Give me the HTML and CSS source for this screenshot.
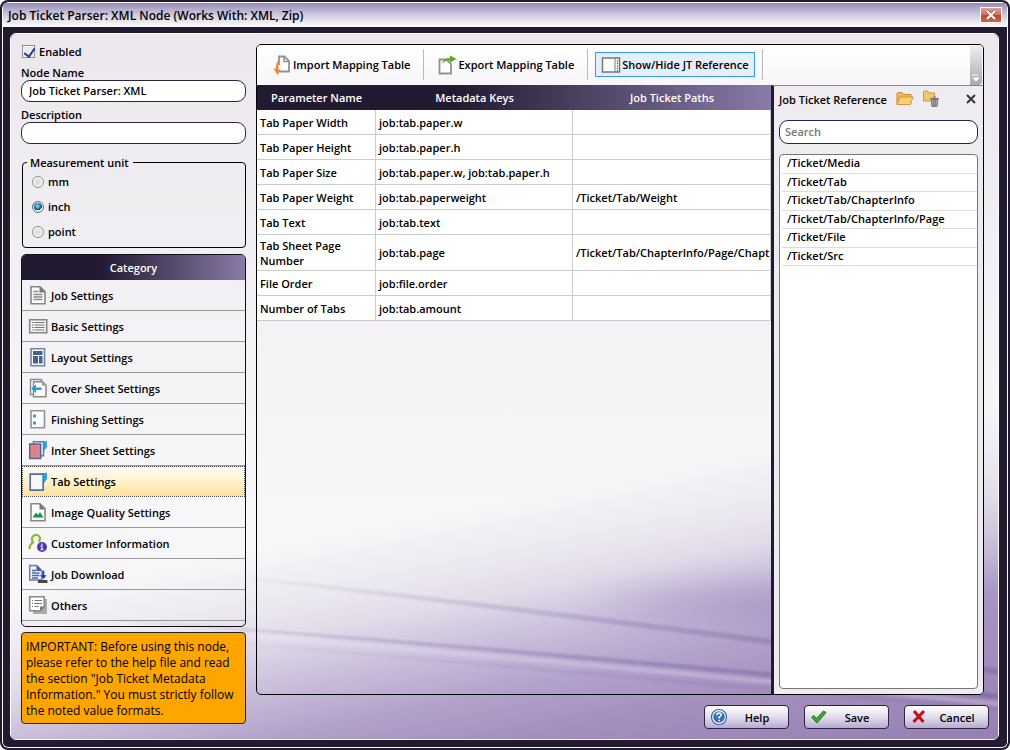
FILE: index.html
```html
<!DOCTYPE html>
<html lang="en">
<head>
<meta charset="utf-8">
<title>Job Ticket Parser</title>
<link rel="stylesheet" href="styles.css">
</head>
<body>
<div class="window">
  <header class="titlebar">
    <h1 class="title">Job Ticket Parser: XML Node (Works With: XML, Zip)</h1>
    <button class="win-close" type="button" aria-label="Close window">
      <svg width="10" height="10" viewBox="0 0 10 10"><path d="M1 1l8 8M9 1L1 9" stroke="#8a4a48" stroke-width="3.4"/><path d="M1 1l8 8M9 1L1 9" stroke="#fff" stroke-width="2.2"/></svg>
    </button>
  </header>
  <main class="content">
    <svg class="backdrop" viewBox="10 33 988 706" preserveAspectRatio="none" aria-hidden="true">
      <defs>
        <linearGradient id="top" x1="0" y1="0" x2="0" y2="1"><stop offset="0" stop-color="#ece7ed"/><stop offset=".35" stop-color="#f2f0f4"/><stop offset=".68" stop-color="#f7f7f9"/><stop offset="1" stop-color="#f7f7f9"/></linearGradient>
        <linearGradient id="haze" gradientUnits="userSpaceOnUse" x1="0" y1="600" x2="65" y2="927">
          <stop offset="0" stop-color="#ece8f0" stop-opacity="0"/><stop offset=".17" stop-color="#ece8f0"/><stop offset=".27" stop-color="#e2dcea"/><stop offset=".41" stop-color="#cbbfdb"/><stop offset=".56" stop-color="#b3a2cb"/><stop offset=".72" stop-color="#a38ebe"/><stop offset="1" stop-color="#967fb2"/>
        </linearGradient>
        <linearGradient id="streak" x1="0" y1="0" x2="1" y2="0"><stop offset="0" stop-color="#8d7bb0" stop-opacity=".08"/><stop offset=".5" stop-color="#8d78b0" stop-opacity=".5"/><stop offset="1" stop-color="#8670aa"/></linearGradient>
        <linearGradient id="shine" x1="0" y1="0" x2="1" y2="0"><stop offset="0" stop-color="#fff" stop-opacity=".15"/><stop offset="1" stop-color="#d8cbe4" stop-opacity=".4"/></linearGradient>
        <filter id="soft" x="-30%" y="-60%" width="160%" height="220%"><feGaussianBlur stdDeviation="17"/></filter>
        <filter id="fine" x="-5%" y="-20%" width="110%" height="140%"><feGaussianBlur stdDeviation="1.2"/></filter>
      </defs>
      <rect x="10" y="33" width="988" height="706" fill="url(#top)"/>
      <rect x="10" y="33" width="988" height="706" fill="url(#haze)"/>
      <path d="M1040 580Q780 570 580 608Q760 620 1040 660Z" fill="#a18dbf" opacity=".7" filter="url(#soft)"/>
      <g filter="url(#fine)">
        <path d="M250 577Q500 602 1000 669L1000 675Q500 608 250 580Z" fill="url(#streak)" opacity=".75"/>
        <path d="M120 619Q500 645 1000 694L1000 699Q500 650 120 621Z" fill="url(#streak)"/>
        <path d="M120 624Q500 652 1000 702L1000 706Q500 657 120 629Z" fill="url(#shine)"/>
        <path d="M200 638Q500 664 1000 708L1000 711Q500 668 200 641Z" fill="url(#streak)" opacity=".4"/>
      </g>
    </svg>

    <div class="body">
      <aside class="side">
        <label class="check"><input type="checkbox" checked> Enabled</label>
        <div class="field">
          <label for="node-name">Node Name</label>
          <input id="node-name" class="text" type="text" value="Job Ticket Parser: XML">
        </div>
        <div class="field">
          <label for="description">Description</label>
          <input id="description" class="text" type="text">
        </div>
        <fieldset class="units">
          <legend>Measurement unit</legend>
          <label><input type="radio" name="unit"> mm</label>
          <label><input type="radio" name="unit" checked> inch</label>
          <label><input type="radio" name="unit"> point</label>
        </fieldset>
        <nav class="category">
          <h2 class="cat-head">Category</h2>
          <button class="cat" type="button"><svg class="ico" viewBox="0 0 20 20"><path d="M3 1.7h9l5 5v12H3z" fill="#fff" stroke="#888" stroke-width="1.6"/><path d="M11.5 1.5v6H17z" fill="#777"/><path d="M5.500 6.500h5M5.500 9.500h9M5.500 12h9M5.500 14.500h9" stroke="#888" stroke-width="1.400"/></svg>Job Settings</button>
          <button class="cat" type="button"><svg class="ico" viewBox="0 0 20 20"><path d="M1.700 3.700h17v13h-17z" fill="#f5f5f5" stroke="#858585" stroke-width="1.600"/><path d="M4 6.500h1.500M4 9h1.500M4 11.500h1.500M4 14h1.500M6.500 6.500h10M6.500 9h10M6.500 11.500h10M6.500 14h10" stroke="#777" stroke-width="1.200"/></svg>Basic Settings</button>
          <button class="cat" type="button"><svg class="ico" viewBox="0 0 20 20"><path d="M3 1.700h13.500v17H3z" fill="#fff" stroke="#7283ab" stroke-width="1.600"/><path d="M5 4h9.500v4H5zM5 9h5v7.500H5zM11 9h3.500v7.500H11z" fill="#465f91"/></svg>Layout Settings</button>
          <button class="cat" type="button"><svg class="ico" viewBox="0 0 20 20"><path d="M2.500 1.500h11v15h-11z" fill="#fff" stroke="#888" stroke-width="1.400"/><path d="M5.500 3.700h9l3.500 3.500v11.500H5.500z" fill="#fff" stroke="#888" stroke-width="1.500"/><path d="M14 3v4.500h4z" fill="#999"/><path d="M3 10.500L8 6.500v3h5.500v2.500H8v3z" fill="#289bd2"/></svg>Cover Sheet Settings</button>
          <button class="cat" type="button"><svg class="ico" viewBox="0 0 20 20"><path d="M3 1.700h13.500v17H3z" fill="#fff" stroke="#929292" stroke-width="1.600"/><path d="M5 5.500h3v3H5zM5 12.500h3v3H5z" fill="#29a4df"/></svg>Finishing Settings</button>
          <button class="cat" type="button"><svg class="ico" viewBox="0 0 20 20"><path d="M14 1.500h5V7l-3 4z" fill="#25a7db"/><path d="M5.500 1.700h10v14h-10z" fill="#fff" stroke="#6479a9" stroke-width="1.500"/><path d="M15.500 1.500H19V6l-3 3z" fill="#25a7db"/><path d="M1.700 4h11v14.500h-11z" fill="#e28188" stroke="#566790" stroke-width="1.500"/></svg>Inter Sheet Settings</button>
          <button class="cat selected" type="button"><svg class="ico" viewBox="0 0 20 20"><path d="M14 1h5v6l-3 4z" fill="#25a7db"/><path d="M2.200 2.200h13v16h-13z" fill="#f7f9ff" stroke="#566d9e" stroke-width="1.700"/><path d="M15 1.500h4V6l-3 4z" fill="#25a7db"/></svg>Tab Settings</button>
          <button class="cat" type="button"><svg class="ico" viewBox="0 0 20 20"><path d="M3 1.700h9l5 5v12H3z" fill="#fff" stroke="#888" stroke-width="1.600"/><path d="M11.500 1.500v6H17z" fill="#777"/><path d="M4.500 15.500l3.500-5 2 2.500 2-3 3.500 5.500z" fill="#129447"/></svg>Image Quality Settings</button>
          <button class="cat" type="button"><svg class="ico" viewBox="0 0 20 20"><path d="M1.500 16c0-5 2-5.500 3.500-6.500C2.500 5 5 1.800 8 1.800s5.500 3.200 2.700 7" fill="none" stroke="#8aba35" stroke-width="2.200"/><circle cx="14" cy="14" r="5" fill="#5536a0"/><path d="M12.500 13h1.500v3.500M12.500 16.500h3M14 10.500v1.500" stroke="#ddd3fb" stroke-width="1.300" fill="none"/></svg>Customer Information</button>
          <button class="cat" type="button"><svg class="ico" viewBox="0 0 20 20"><path d="M1.700 1.500h7l5 5v9.500h-12z" fill="#edf2fb" stroke="#6a7ca7" stroke-width="1.500"/><path d="M8.500 1v6H14z" fill="#465f91"/><path d="M4 6.500h4M4 9h7.500M4 11.500h7.500M4 14h6" stroke="#536b9a" stroke-width="1.300"/><path d="M14 6.500h2.500V11H19l-3.700 4.500L11.500 11H14z" fill="#1732ee" stroke="#eef" stroke-width=".5"/><path d="M10 16h9.500v3H10z" fill="#484848"/></svg>Job Download</button>
          <button class="cat" type="button"><svg class="ico" viewBox="0 0 20 20"><path d="M5 4h14v15H5z" fill="#aaa"/><path d="M1.700 1.700h14.500v10l-4 4H1.700z" fill="#fff" stroke="#888" stroke-width="1.500"/><path d="M16 11.500h-4V16z" fill="#777"/><path d="M4 5.500h1M6.500 5.500h7.500M4 8.500h1M6.500 8.500h7.500M4 11.500h1M6.500 11.500h4" stroke="#777" stroke-width="1.200"/></svg>Others</button>
        </nav>
        <p class="notice">IMPORTANT: Before using this node, please refer to the help file and read the section "Job Ticket Metadata Information." You must strictly follow the noted value formats.</p>
      </aside>

      <section class="panel">
        <div class="toolbar">
          <div class="tools">
            <button class="tool" type="button"><svg class="ico" viewBox="0 0 20 20"><path d="M7 10V1.500h5.500L17 6v10.500H6" fill="#fff" stroke="#929292" stroke-width="1.800"/><path d="M12 1v5.500h5" fill="none" stroke="#929292" stroke-width="1.500"/><path d="M7.500 4.500Q3.500 7 4 13.500H1.500L5.500 20l3-5.500H6.500Q6 8 7.500 4.500z" fill="#f5862d"/></svg>Import Mapping Table</button>
            <button class="tool" type="button"><svg class="ico" viewBox="0 0 20 20"><path d="M2.500 4.500h7l4.500 4.500v9.500H2.500z" fill="#fff" stroke="#929292" stroke-width="1.800"/><path d="M5 9Q6.500 2.500 13 3V.500L19.500 4 13 7.500V5.500Q8 5 5 9z" fill="#5ba926"/></svg>Export Mapping Table</button>
            <button class="tool active" type="button"><svg class="ico" viewBox="0 0 20 20"><path d="M1.500 3h17v14h-17z" fill="#fff" stroke="#777" stroke-width="1.500"/><path d="M14 3v14" stroke="#777"/><path d="M16.500 5v11" stroke="#666" stroke-dasharray="1.500 1"/></svg>Show/Hide JT Reference</button>
          </div>
          <button class="grip" type="button" aria-label="More tools"><svg width="8" height="8" viewBox="0 0 8 8"><path d="M0 1h6M1 4h6l-3 3z" stroke="#fff" fill="#fff"/></svg></button>
        </div>
        <div class="split">
          <div class="grid">
            <table>
              <colgroup><col class="c1"><col class="c2"><col class="c3"></colgroup>
              <thead><tr><th>Parameter Name</th><th>Metadata Keys</th><th>Job Ticket Paths</th></tr></thead>
              <tbody>
                <tr><td>Tab Paper Width</td><td>job:tab.paper.w</td><td></td></tr>
                <tr><td>Tab Paper Height</td><td>job:tab.paper.h</td><td></td></tr>
                <tr><td>Tab Paper Size</td><td>job:tab.paper.w, job:tab.paper.h</td><td></td></tr>
                <tr><td>Tab Paper Weight</td><td>job:tab.paperweight</td><td class="path">/Ticket/Tab/Weight</td></tr>
                <tr><td>Tab Text</td><td>job:tab.text</td><td></td></tr>
                <tr><td>Tab Sheet Page Number</td><td>job:tab.page</td><td class="path">/Ticket/Tab/ChapterInfo/Page/Chapt</td></tr>
                <tr><td>File Order</td><td>job:file.order</td><td></td></tr>
                <tr><td>Number of Tabs</td><td>job:tab.amount</td><td></td></tr>
              </tbody>
            </table>
          </div>
          <aside class="reference">
            <div class="ref-head">
              <h2 class="ref-title">Job Ticket Reference</h2>
              <button class="icon-btn" type="button" aria-label="Open"><svg width="18" height="16" viewBox="0 0 18 16"><path d="M1 13V2.500L2 1.500h4L7.500 3.500H15V6" fill="#f0b84c" stroke="#c78a2c"/><path d="M1 13.500L4 6h13l-2.500 7.500z" fill="#f9d074" stroke="#d3983a"/></svg></button>
              <button class="icon-btn" type="button" aria-label="Clear"><svg width="18" height="18" viewBox="0 0 18 18"><path d="M1.500 11V2L2.500 1h3L7 3h5.500v8z" fill="#f7c766" stroke="#cf9539"/><path d="M9 9.500h7l-1 7h-5z" fill="#aaa" stroke="#777"/><path d="M8 8.500h9M11 7h3M11.500 10v6M13.500 10v6" stroke="#777"/></svg></button>
              <button class="icon-btn ref-close" type="button" aria-label="Close reference"><svg width="10" height="10" viewBox="0 0 10 10"><path d="M1 1l8 8M9 1L1 9" stroke="#333" stroke-width="1.900"/></svg></button>
            </div>
            <input class="search" type="text" placeholder="Search" aria-label="Search">
            <ul class="paths">
              <li>/Ticket/Media</li><li>/Ticket/Tab</li><li>/Ticket/Tab/ChapterInfo</li><li>/Ticket/Tab/ChapterInfo/Page</li><li>/Ticket/File</li><li>/Ticket/Src</li>
            </ul>
          </aside>
        </div>
      </section>
    </div>

    <footer class="actions">
      <button class="action" type="button"><svg width="18" height="18" viewBox="0 0 18 18"><circle cx="9" cy="9" r="7.500" fill="#fff" stroke="#315f9e" stroke-width="1.200"/><circle cx="9" cy="9" r="5.800" fill="#3c6fb0"/><path d="M6.800 7.200Q7 5 9.200 5t2 2Q11 8.200 9.200 9v1.500M9.200 11.800v1.500" fill="none" stroke="#fff" stroke-width="1.500"/></svg><span>Help</span></button>
      <button class="action" type="button"><svg width="18" height="18" viewBox="0 0 18 18"><path d="M1.500 9.500L4 7.500l2.500 3L13.500 3l2.500 1.500L7 15z" fill="#3fa535" stroke="#23751f"/></svg><span>Save</span></button>
      <button class="action" type="button"><svg width="18" height="18" viewBox="0 0 18 18"><path d="M4 3l9.500 11M14 3L3.500 14" stroke="#c40d16" stroke-width="3"/></svg><span>Cancel</span></button>
    </footer>
  </main>
</div>
</body>
</html>
```
FILE: styles.css
```css
* { box-sizing: border-box; }

body {
  margin: 0;
  background: #fff;
  color: #000;
  font: 600 11px/15px "Open Sans", "Noto Sans", sans-serif;
}

button, input { font: inherit; color: inherit; }
button { padding: 0; border: 0; background: none; display: flex; align-items: center; }
h1, h2, p, ul { margin: 0; padding: 0; font: inherit; }

.window {
  min-height: 100vh;
  display: flex;
  flex-direction: column;
  padding: 1px;
  border: 2px solid #211a30;
  border-radius: 8px;
  background: #211a30;
  box-shadow: inset 0 0 0 1px #fff;
}

.titlebar {
  height: 24px;
  display: flex;
  align-items: center;
  justify-content: space-between;
  padding: 0 5px;
  border-radius: 4px 4px 0 0;
  background: linear-gradient(#968cb6, #cfcade 50%, #fff);
}

.title { font-size: 12px; }

.win-close {
  width: 22px;
  height: 16px;
  justify-content: center;
  border: 1px solid #fff;
  background: linear-gradient(#e5a196, #d3705f 48%, #c2432c 50%, #d0654a);
}

.content {
  position: relative;
  flex: 1;
  display: flex;
  flex-direction: column;
  margin: 6px 8px 7px 7px;
  padding: 10px 9px 10px 10px;
  border: 1px solid #fff;
  border-radius: 6px;
  overflow: hidden;
}

.backdrop { position: absolute; inset: 0; width: 100%; height: 100%; }

.body {
  position: relative;
  flex: 1;
  display: flex;
  gap: 10px;
  margin-right: 5px;
}

.side {
  width: 225px;
  display: flex;
  flex-direction: column;
  margin-bottom: -29px;
}

.check { display: flex; align-items: center; gap: 4px; height: 15px; padding-left: 1px; }
.check input {
  appearance: none;
  width: 13px;
  height: 13px;
  margin: 0;
  border: 1px solid #8e8f8f;
  background: #e9ecef;
  box-shadow: inset 0 0 0 1px #f8f8f8;
}
.check input:checked::after {
  content: "";
  display: block;
  width: 5px;
  height: 9px;
  margin: 0 0 0 3px;
  border: solid #313c90;
  border-width: 0 2px 2px 0;
  transform: rotate(35deg);
}

.field { display: flex; flex-direction: column; margin-top: 5px; }
.field label { height: 15px; }
.check + .field { margin-top: 6px; }
.text {
  width: 100%;
  height: 22px;
  padding: 0 7px 2px;
  border: 1px solid #2b2444;
  border-radius: 9px;
  background: #fff;
}

.units {
  margin: 11px 0 0 1px;
  padding: 0 9px 3px;
  border: 1px solid #000;
  border-radius: 4px;
  height: 93px;
}
.units legend { padding: 0 4px 0 3px; margin-left: -5px; }
.units label { display: flex; align-items: center; gap: 4px; height: 25px; }
.units legend + label { margin-top: -1px; }
.units input {
  appearance: none;
  width: 12px;
  height: 12px;
  margin: 0;
  border: 1px solid #8e8f8f;
  border-radius: 50%;
  background: radial-gradient(#d5d5d5, #eee 60%);
  box-shadow: inset 0 0 0 1px #f8f8f8;
}
.units input:checked {
  border-color: #5c6b78;
  background: radial-gradient(circle at 45% 40%, #8fe0ff, #1b7fb8 35%, #0d3c63 52%, #f4f4f4 56%);
}

.category {
  flex: 1;
  margin-top: 6px;
  border: 1px solid #111;
  border-radius: 5px;
  overflow: hidden;
}
.cat-head {
  height: 25px;
  line-height: 26px;
  text-align: center;
  color: #fff;
  background: linear-gradient(90deg, #211a30 35%, #8a7aa8);
}
.cat { width: 100%; height: 31px; padding-left: 6px; gap: 3px; border-bottom: 1px solid #999; }
.selected {
  border: 1px dotted #444;
  padding-left: 5px;
  background: linear-gradient(#fffdf8, #ffefc6 55%, #fde29a);
}
.ico { width: 20px; height: 20px; flex: none; }

.notice {
  margin-top: 5px;
  padding: 6px 3px 4px 4px;
  border: 1px solid #222;
  border-radius: 4px;
  background: #ffa500;
  font-weight: 400;
  font-size: 12px;
  line-height: 16px;
}

.panel {
  flex: 1;
  min-width: 0;
  display: flex;
  flex-direction: column;
  border: 1px solid #000;
  border-radius: 5px;
  overflow: hidden;
}

.toolbar { height: 40px; display: flex; background: linear-gradient(#fff, #f7f5f9); padding-right: 1px; }
.tools { flex: 1; display: flex; align-items: center; padding: 0 0 1px 2px; }
.tool {
  position: relative;
  height: 25px;
  margin: 0 7px;
  padding: 0 5px;
  border: 1px solid transparent;
  gap: 1px;
  white-space: nowrap;
}
.tool + .tool { margin-left: 8px; }
.tool::after {
  content: "";
  position: absolute;
  right: -9px;
  top: -4px;
  width: 1px;
  height: 31px;
  background: #bbb;
}
.tool.active { border-color: #3399ff; background: #e5effa; }
.grip {
  width: 12px;
  align-items: flex-end;
  justify-content: center;
  padding-bottom: 3px;
  border-radius: 0 4px 4px 0;
  background: linear-gradient(#f0f0f0, #aaa);
}

.split { flex: 1; display: flex; }
.grid { flex: 1; min-width: 0; }
table { width: 100%; border-collapse: separate; border-spacing: 0; table-layout: fixed; }
.c1 { width: 119px; }
.c2 { width: 197px; }
thead { background: linear-gradient(90deg, #211a30 38%, #8a7aa8); }
th { height: 25px; padding: 0; color: #fff; font-weight: 600; }
td {
  height: 25px;
  padding: 0 3px;
  border-right: 1px solid #ccc;
  border-bottom: 1px solid #ccc;
  background: #fff;
}
tr:nth-child(6) td { height: 36px; }
td.path { padding-right: 0; white-space: nowrap; }

.reference {
  width: 212px;
  display: flex;
  flex-direction: column;
  padding: 4px 5px 5px;
  border-left: 3px solid #211a30;
  border-top: 1px solid #888;
  background: #eeebf1;
}
.ref-head { display: flex; align-items: center; height: 18px; }
.ref-title { flex: none; margin-right: 9px; }
.icon-btn + .icon-btn { margin-left: 8px; }
.icon-btn.ref-close { margin-left: auto; margin-right: 2px; }
.search {
  width: 100%;
  height: 24px;
  margin-top: 12px;
  padding: 0 5px 2px;
  border: 1px solid #2b2444;
  border-radius: 9px;
  background: #fff;
}
.search::placeholder { color: #777; opacity: 1; }
.paths {
  flex: 1;
  margin-top: 10px;
  padding-left: 2px;
  border: 1px solid #777;
  border-radius: 4px;
  background: #fff;
  list-style: none;
}
.paths li { height: 19px; padding-left: 5px; line-height: 16px; border-bottom: 1px solid #ddd; }
.paths li:nth-child(even) { height: 18px; }

.actions { position: relative; display: flex; justify-content: flex-end; gap: 15px; margin-top: 10px; }
.action {
  width: 85px;
  height: 24px;
  padding: 0 5px;
  border: 1px solid #2b2444;
  border-radius: 4px;
  background: linear-gradient(#fff, #e2dcec 50%, #b8aad0);
}
.action span { flex: 1; text-align: center; padding-left: 3px; }
```
